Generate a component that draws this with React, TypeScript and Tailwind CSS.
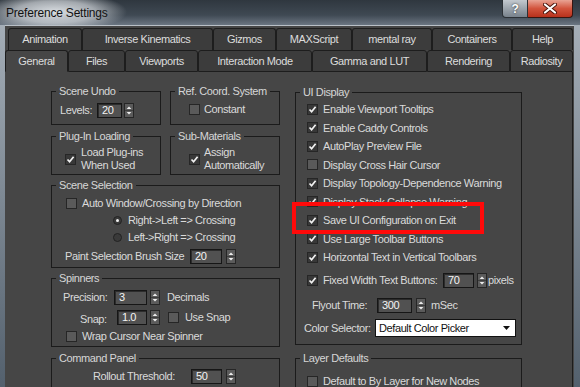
import React from 'react';

// 3ds Max "Preference Settings" dialog, General tab

const topTabs = [
  { label: 'Animation', w: 'w-[74px]' },
  { label: 'Inverse Kinematics', w: 'w-[131px]' },
  { label: 'Gizmos', w: 'w-[63px]' },
  { label: 'MAXScript', w: 'w-[76px]' },
  { label: 'mental ray', w: 'w-[80px]' },
  { label: 'Containers', w: 'w-[80px]' },
  { label: 'Help', w: 'w-[61px]' },
];

const frontTabs = [
  { label: 'General', w: 'w-[63px]', active: true },
  { label: 'Files', w: 'w-[57px]' },
  { label: 'Viewports', w: 'w-[73px]' },
  { label: 'Interaction Mode', w: 'w-[114px]' },
  { label: 'Gamma and LUT', w: 'w-[115px]' },
  { label: 'Rendering', w: 'w-[83px]' },
  { label: 'Radiosity', w: 'w-[63px]' },
];

const uiDisplay = [
  { label: 'Enable Viewport Tooltips', checked: true },
  { label: 'Enable Caddy Controls', checked: true },
  { label: 'AutoPlay Preview File', checked: true },
  { label: 'Display Cross Hair Cursor', checked: false },
  { label: 'Display Topology-Dependence Warning', checked: true },
  { label: 'Display Stack Collapse Warning', checked: true },
  { label: 'Save UI Configuration on Exit', checked: true },
  { label: 'Use Large Toolbar Buttons', checked: true },
  { label: 'Horizontal Text in Vertical Toolbars', checked: true },
];

const GroupBox = ({ title, className, children }) => (
  <div className={`shrink-0 border border-[#1b1b1b] ${className}`}>
    <div className="-mt-[8px] ml-[4px] w-fit bg-[#464646] px-[3px] leading-[14px] text-[#d6d6d6]">
      {title}
    </div>
    {children}
  </div>
);

const Checkbox = ({ checked }) => (
  <div
    className={`flex h-[11px] w-[11px] shrink-0 items-center justify-center border border-[#262626] ${
      checked ? 'bg-[#383838]' : 'bg-[#5a5a5a]'
    }`}
  >
    {checked && (
      <svg width="9" height="9" viewBox="0 0 9 9">
        <polyline points="1.5,4.5 3.6,6.8 7.6,1.8" fill="none" stroke="#f2f2f2" strokeWidth="1.7" />
      </svg>
    )}
  </div>
);

const Radio = ({ checked }) => (
  <div className="flex h-[9px] w-[9px] shrink-0 items-center justify-center rounded-full border border-[#222] bg-[#3a3a3a]">
    {checked && <div className="h-[3px] w-[3px] rounded-full bg-[#f0f0f0]" />}
  </div>
);

const Arrows = () => (
  <svg width="10" height="15" viewBox="0 0 10 15" className="shrink-0">
    <rect x="0.5" y="0.5" width="9" height="14" fill="#5b5b5b" stroke="#262626" />
    <line x1="1" y1="7.5" x2="9" y2="7.5" stroke="#3c3c3c" />
    <path d="M2.6 6 L5 3.4 L7.4 6 Z" fill="#ececec" />
    <path d="M2.6 9 L5 11.6 L7.4 9 Z" fill="#ececec" />
  </svg>
);

const Field = ({ value, w }) => (
  <div
    className={`${w} h-[15px] shrink-0 border border-[#161616] bg-[#515151] pl-[4px] leading-[13px] text-[#f4f4f4] shadow-[inset_1px_1px_0_#2c2c2c]`}
  >
    {value}
  </div>
);

const CheckRow = ({ checked, label, className }) => (
  <div className={`flex items-center gap-[5px] ${className}`}>
    <Checkbox checked={checked} />
    <span className="whitespace-nowrap">{label}</span>
  </div>
);

const TitleBar = () => (
  <div className="flex h-[25px] bg-[radial-gradient(ellipse_72px_20px_at_55px_12px,rgba(222,226,230,0.97)_0%,rgba(222,226,230,0.65)_55%,rgba(222,226,230,0)_100%),linear-gradient(to_bottom,#2f373f,#3f4953_60%,#6b7682)]">
    <div className="pl-[6px] pt-[5px] text-[12px] leading-[16px] tracking-[-0.2px] text-[#121212]">
      Preference Settings
    </div>
    <div className="ml-auto mr-[7px] flex">
      <div className="flex h-[18px] w-[26px] items-center justify-center rounded-bl-[4px] border border-t-0 border-[#2c3136] bg-gradient-to-b from-[#c3c9cf] to-[#78828c] text-[12px] font-bold text-white [text-shadow:0_0_2px_#222]">
        ?
      </div>
      <div className="flex h-[18px] w-[45px] items-center justify-center rounded-br-[4px] border border-l-0 border-t-0 border-[#3a1510] bg-[linear-gradient(to_bottom,#e9a394,#d2543d_50%,#b8311c)]">
        <svg width="14" height="11" viewBox="0 0 14 11">
          <path d="M2 1.5 L12 9.5 M12 1.5 L2 9.5" stroke="#4a130b" strokeWidth="4" strokeLinecap="round" />
          <path d="M2 1.5 L12 9.5 M12 1.5 L2 9.5" stroke="#ffffff" strokeWidth="2.2" strokeLinecap="round" />
        </svg>
      </div>
    </div>
  </div>
);

export default function App() {
  return (
    <div className="relative h-[387px] w-[580px] overflow-hidden bg-[linear-gradient(to_bottom,#aab3bc,#53606d)] font-['Liberation_Sans',Arial,sans-serif] text-[11px] tracking-[-0.4px] text-[#dadada]">
      <TitleBar />

      <div className="ml-[5px] mr-[6px] h-[362px] border-t border-[#b9c0c7] bg-[#464646]">
        {/* Tabs */}
        <div className="mt-[2px] flex pl-[3px]">
          {topTabs.map((t) => (
            <div
              key={t.label}
              className={`${t.w} flex h-[22px] shrink-0 items-center justify-center rounded-t-[3px] border-x border-t border-[#1d1d1d] bg-[#3c3c3c] text-[#dcdcdc]`}
            >
              {t.label}
            </div>
          ))}
        </div>
        <div className="flex">
          {frontTabs.map((t) => (
            <div
              key={t.label}
              className={`${t.w} flex h-[22px] shrink-0 items-center justify-center rounded-t-[3px] border border-[#1d1d1d] text-[#dcdcdc] ${
                t.active ? 'border-b-[#464646] bg-[#464646]' : 'bg-[#3c3c3c]'
              }`}
            >
              {t.label}
            </div>
          ))}
        </div>

        {/* Panel */}
        <div className="mr-[1px] flex h-[315px] border-r border-[#1d1d1d] pl-[46px] pt-[19px]">
          {/* Left column */}
          <div className="flex w-[229px] shrink-0 flex-col">
            <div className="flex gap-[9px]">
              <GroupBox title="Scene Undo" className="h-[34px] w-[110px]">
                <div className="mt-[5px] flex h-[15px] items-center pl-[8px]">
                  <span className="w-[37px]">Levels:</span>
                  <Field value="20" w="w-[25px]" />
                  <div className="ml-[2px]">
                    <Arrows />
                  </div>
                </div>
              </GroupBox>
              <GroupBox title="Ref. Coord. System" className="h-[34px] w-[110px]">
                <div className="mt-[4px] flex h-[15px] items-center gap-[4px] pl-[18px]">
                  <Checkbox checked={false} />
                  <span>Constant</span>
                </div>
              </GroupBox>
            </div>

            <div className="mt-[11px] flex gap-[9px]">
              <GroupBox title="Plug-In Loading" className="h-[39px] w-[110px]">
                <div className="mt-[3px] flex items-center gap-[5px] pl-[13px]">
                  <Checkbox checked />
                  <div className="leading-[13px]">
                    Load Plug-ins
                    <br />
                    When Used
                  </div>
                </div>
              </GroupBox>
              <GroupBox title="Sub-Materials" className="h-[39px] w-[110px]">
                <div className="mt-[3px] flex items-center gap-[4px] pl-[18px]">
                  <Checkbox checked />
                  <div className="leading-[13px]">
                    Assign
                    <br />
                    Automatically
                  </div>
                </div>
              </GroupBox>
            </div>

            <GroupBox title="Scene Selection" className="mt-[10px] h-[83px] w-[229px]">
              <CheckRow checked={false} label="Auto Window/Crossing by Direction" className="mt-[3px] h-[17px] pl-[14px]" />
              <div className="flex h-[17px] items-center gap-[6px] pl-[61px]">
                <Radio checked />
                <span>Right-&gt;Left =&gt; Crossing</span>
              </div>
              <div className="flex h-[17px] items-center gap-[6px] pl-[61px]">
                <Radio checked={false} />
                <span>Left-&gt;Right =&gt; Crossing</span>
              </div>
              <div className="flex h-[20px] items-center pl-[13px]">
                <span className="w-[125px]">Paint Selection Brush Size</span>
                <Field value="20" w="w-[32px]" />
                <div className="ml-[4px]">
                  <Arrows />
                </div>
              </div>
            </GroupBox>

            <GroupBox title="Spinners" className="mt-[10px] h-[69px] w-[229px]">
              <div className="mt-[3px] flex h-[18px] items-center pl-[11px]">
                <span className="w-[51px]">Precision:</span>
                <Field value="3" w="w-[33px]" />
                <div className="ml-[3px]">
                  <Arrows />
                </div>
                <span className="ml-[7px]">Decimals</span>
              </div>
              <div className="flex h-[22px] items-center pl-[28px]">
                <span className="mt-[5px] w-[37px]">Snap:</span>
                <Field value="1.0" w="w-[30px]" />
                <div className="ml-[3px]">
                  <Arrows />
                </div>
                <div className="ml-[8px]">
                  <Checkbox checked={false} />
                </div>
                <span className="ml-[6px]">Use Snap</span>
              </div>
              <CheckRow checked={false} label="Wrap Cursor Near Spinner" className="h-[16px] pl-[14px]" />
            </GroupBox>

            <GroupBox title="Command Panel" className="mt-[11px] h-[40px] w-[229px]">
              <div className="mt-[3px] flex h-[16px] items-center pl-[41px]">
                <span className="w-[98px]">Rollout Threshold:</span>
                <Field value="50" w="w-[31px]" />
                <div className="ml-[4px]">
                  <Arrows />
                </div>
              </div>
            </GroupBox>
          </div>

          {/* Right column */}
          <div className="ml-[15px] mt-[1px] flex w-[227px] shrink-0 flex-col">
            <GroupBox title="UI Display" className="h-[253px] w-[227px]">
              <div className="mt-[1px]">
                {uiDisplay.map((r) => (
                  <CheckRow key={r.label} checked={r.checked} label={r.label} className="h-[18.5px] pl-[11px]" />
                ))}
              </div>
              <div className="mt-[5.5px] flex h-[16px] items-center pl-[11px]">
                <Checkbox checked />
                <span className="ml-[5px] w-[120px] whitespace-nowrap">Fixed Width Text Buttons:</span>
                <Field value="70" w="w-[31px]" />
                <div className="ml-[3px]">
                  <Arrows />
                </div>
                <span className="ml-[1px]">pixels</span>
              </div>
              <div className="mt-[9px] flex h-[16px] items-center pl-[16px]">
                <span className="w-[65px]">Flyout Time:</span>
                <Field value="300" w="w-[35px]" />
                <div className="ml-[4px]">
                  <Arrows />
                </div>
                <span className="ml-[5px]">mSec</span>
              </div>
              <div className="mt-[6px] flex h-[18px] items-center pl-[8px]">
                <span className="w-[71px]">Color Selector:</span>
                <div className="flex h-[18px] w-[141px] items-center justify-between border border-[#111] bg-white pl-[3px] pr-[5px] text-[#111]">
                  <span>Default Color Picker</span>
                  <svg width="7" height="4" viewBox="0 0 7 4">
                    <path d="M0 0 L7 0 L3.5 4 Z" fill="#111" />
                  </svg>
                </div>
              </div>
            </GroupBox>

            <GroupBox title="Layer Defaults" className="mt-[13px] h-[40px] w-[227px]">
              <CheckRow checked={false} label="Default to By Layer for New Nodes" className="mt-[8px] h-[16px] pl-[11px]" />
            </GroupBox>
          </div>
        </div>
      </div>

      {/* red annotation frame */}
      <div className="pointer-events-none absolute left-[292px] top-[202px] h-[32px] w-[192px] border-4 border-[#ff0a0a]" />
    </div>
  );
}
